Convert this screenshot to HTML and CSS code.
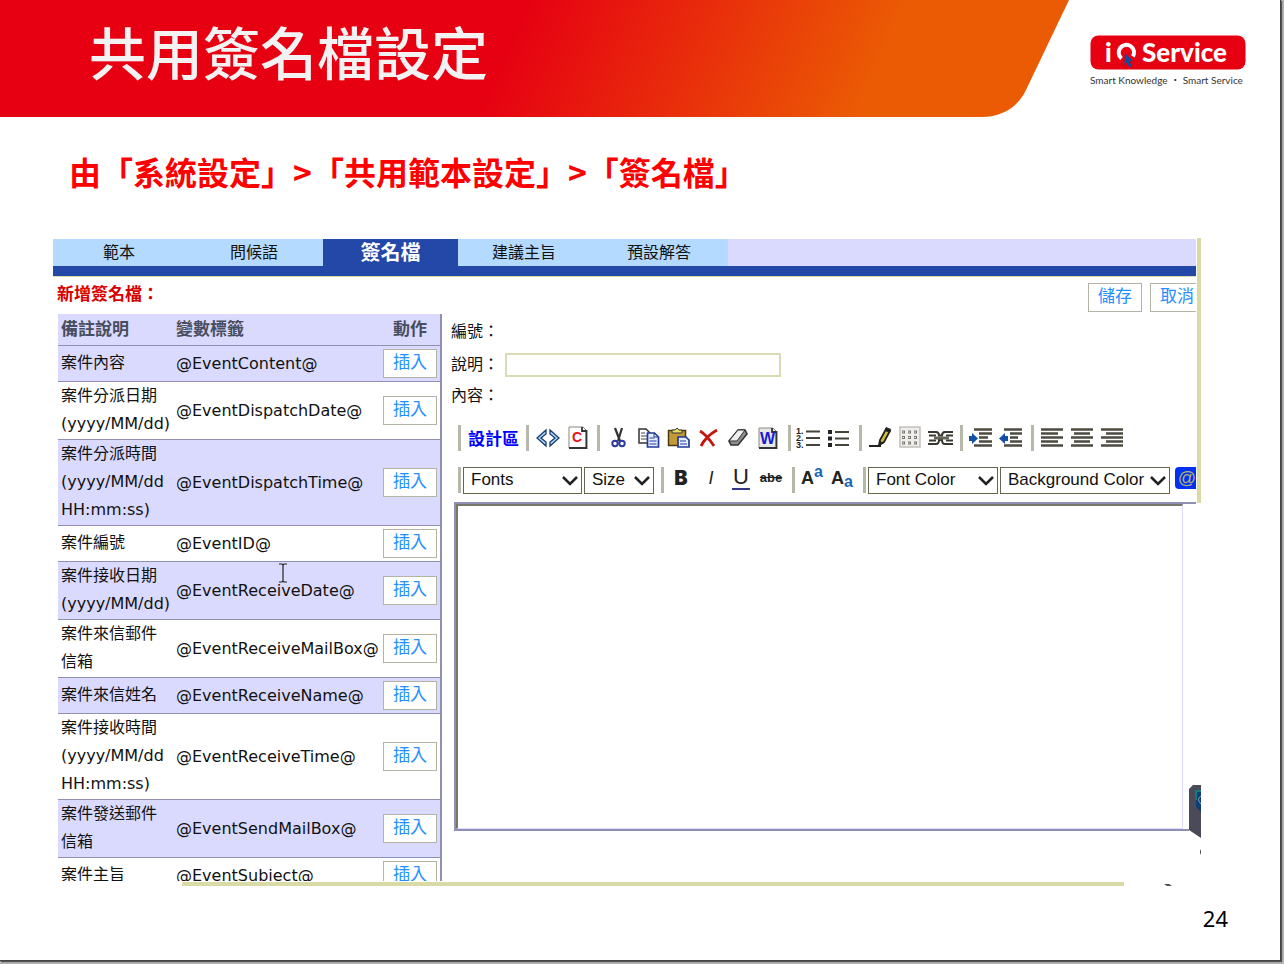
FILE: index.html
```html
<!DOCTYPE html>
<html lang="zh-Hant">
<head>
<meta charset="utf-8">
<title>共用簽名檔設定</title>
<link rel="stylesheet" href="styles.css">
</head>
<body>
<main class="slide">
  <header class="banner">
    <svg class="banner-shape" width="1070" height="117" viewBox="0 0 1070 117" aria-hidden="true">
      <defs>
        <linearGradient id="heat" gradientUnits="userSpaceOnUse" x1="500" y1="60" x2="820" y2="202">
          <stop offset="0" stop-color="#e60012"/>
          <stop offset="1" stop-color="#eb5b04"/>
        </linearGradient>
      </defs>
      <path d="M0 0H1069L1026 90C1018 107 1002 117 982 117H0Z" fill="url(#heat)"/>
    </svg>
    <h1 class="title">共用簽名檔設定</h1>
    <div class="brand">
      <svg width="156" height="36" viewBox="0 0 156 36" role="img" aria-label="iQ Service">
        <rect x="0.5" y="0.5" width="155" height="34" rx="8" fill="#e60012"/>
        <text x="15" y="27" class="brand-name">i</text>
        <path d="M31.500 23.500A7.700 7.700 0 1 1 43 21.500" fill="none" stroke="#fff" stroke-width="4"/>
        <text x="52" y="27" class="brand-name">Service</text>
        <path d="M35 18l8 8-3.500.500 2.500 5-2.500 1-2.500-5-2.500 2.500z" fill="#0f4c9c"/>
      </svg>
      <p class="tagline">Smart Knowledge ・ Smart Service</p>
    </div>
  </header>

  <p class="lead">由「系統設定」&gt;「共用範本設定」&gt;「簽名檔」</p>

  <div class="frame">
    <section class="app">
      <nav class="tabs">
        <button class="tab">範本</button>
        <button class="tab">問候語</button>
        <button class="tab active">簽名檔</button>
        <button class="tab">建議主旨</button>
        <button class="tab">預設解答</button>
      </nav>
      <div class="heading">
        <h2>新增簽名檔：</h2>
        <div class="actions">
          <button class="btn">儲存</button>
          <button class="btn">取消</button>
        </div>
      </div>
      <div class="columns">
        <table class="vars">
          <thead>
            <tr><th class="note">備註說明</th><th class="tag">變數標籤</th><th class="act">動作</th></tr>
          </thead>
          <tbody>
            <tr><td>案件內容</td><td>@EventContent@</td><td><button class="btn">插入</button></td></tr>
            <tr><td>案件分派日期<br>(yyyy/MM/dd)</td><td>@EventDispatchDate@</td><td><button class="btn">插入</button></td></tr>
            <tr><td>案件分派時間<br>(yyyy/MM/dd<br>HH:mm:ss)</td><td>@EventDispatchTime@</td><td><button class="btn">插入</button></td></tr>
            <tr><td>案件編號</td><td>@EventID@</td><td><button class="btn">插入</button></td></tr>
            <tr><td>案件接收日期<br>(yyyy/MM/dd)</td><td>@EventReceiveDate@</td><td><button class="btn">插入</button></td></tr>
            <tr><td>案件來信郵件<br>信箱</td><td>@EventReceiveMailBox@</td><td><button class="btn">插入</button></td></tr>
            <tr><td>案件來信姓名</td><td>@EventReceiveName@</td><td><button class="btn">插入</button></td></tr>
            <tr><td>案件接收時間<br>(yyyy/MM/dd<br>HH:mm:ss)</td><td>@EventReceiveTime@</td><td><button class="btn">插入</button></td></tr>
            <tr><td>案件發送郵件<br>信箱</td><td>@EventSendMailBox@</td><td><button class="btn">插入</button></td></tr>
            <tr><td>案件主旨</td><td>@EventSubject@</td><td><button class="btn">插入</button></td></tr>
          </tbody>
        </table>

        <form class="editor">
          <p class="field">編號：</p>
          <p class="field wide"><label for="desc">說明：</label><input id="desc" class="text" type="text"></p>
          <p class="field last"><label for="body">內容：</label></p>

          <div class="toolbar">
            <i class="sep"></i>
            <button type="button" class="design">設計區</button>
            <i class="sep"></i>
            <div class="group">
              <button type="button" class="tool" aria-label="HTML"><svg width="24" height="24" viewBox="0 0 24 24"><path d="M10 4v4l-5 4 5 4v4L1 12zM14 4v4l5 4-5 4v4l9-8z" fill="#a9d4f0" stroke="#1b3f73" stroke-width="1.300"/></svg></button>
              <button type="button" class="tool" aria-label="清除"><svg width="24" height="24" viewBox="0 0 24 24"><path d="M3 1h14l3 3v18H3z" fill="#fff" stroke="#8a8a80"/><path d="M16 1v4h4.500v17H3" fill="none" stroke="#333" stroke-width="1.800"/><text x="6" y="16" class="glyph-c">C</text></svg></button>
            </div>
            <i class="sep"></i>
            <div class="group">
              <button type="button" class="tool" aria-label="剪下"><svg width="24" height="24" viewBox="0 0 24 24"><path d="M8 2l5 13M15 2l-4 13" stroke="#333" stroke-width="2.200" fill="none"/><circle cx="8" cy="17.500" r="2.700" fill="none" stroke="#2c3aa0" stroke-width="2"/><circle cx="15" cy="17.500" r="2.700" fill="none" stroke="#2c3aa0" stroke-width="2"/></svg></button>
              <button type="button" class="tool" aria-label="複製"><svg width="24" height="24" viewBox="0 0 24 24"><path d="M2 3h7l4 4v10H2z" fill="#fff" stroke="#333" stroke-width="1.500"/><path d="M4 7h4M4 10h6M4 13h6" stroke="#444"/><path d="M10.500 7h7l4 4v10h-11z" fill="#e8ecff" stroke="#223a9a" stroke-width="1.700"/><path d="M17 7v4h4M12.500 12h5M12.500 15h7M12.500 18h7" stroke="#223a9a" fill="none"/></svg></button>
              <button type="button" class="tool" aria-label="貼上"><svg width="24" height="24" viewBox="0 0 24 24"><path d="M1.500 4.500h17v15h-17z" fill="#c39a3a" stroke="#4a3a10" stroke-width="1.500"/><path d="M5 7V4h3l2-2 2 2h3v3z" fill="#e8e060" stroke="#333"/><path d="M11 11h8l3 3v7H11z" fill="#e8ecff" stroke="#223a9a" stroke-width="1.700"/><path d="M13 15h6M13 18h7" stroke="#223a9a"/></svg></button>
              <button type="button" class="tool" aria-label="刪除"><svg width="24" height="24" viewBox="0 0 24 24"><path d="M3 5c5 3 10 9 14 15M20 4C13 8 7 14 4 20" fill="none" stroke="#c4160c" stroke-width="2.800"/></svg></button>
              <button type="button" class="tool" aria-label="橡皮擦"><svg width="24" height="24" viewBox="0 0 24 24"><path d="M2 15l9-11h7l2 4-9 11H4z" fill="#8f8f8f" stroke="#333" stroke-width="1.600"/><path d="M2 15l9-11h7l-8 11z" fill="#eee" stroke="#333"/></svg></button>
              <button type="button" class="tool" aria-label="Word"><svg width="24" height="24" viewBox="0 0 24 24"><path d="M2 2h14l3 3v17H2z" fill="#e8e8e8" stroke="#8a8a80"/><path d="M15 2v4h4.500v16H2" fill="none" stroke="#333" stroke-width="1.800"/><text x="3" y="18" class="glyph-w">W</text></svg></button>
            </div>
            <i class="sep"></i>
            <div class="group">
              <button type="button" class="tool" aria-label="編號清單"><svg width="24" height="24" viewBox="0 0 24 24"><text x="-2" y="8" class="glyph-n">1.</text><text x="-2" y="15" class="glyph-n">2.</text><text x="-2" y="22" class="glyph-n">3.</text><path d="M8 5.500h14M8 12h14M8 19h14" stroke="#444438" stroke-width="2"/></svg></button>
              <button type="button" class="tool" aria-label="項目清單"><svg width="24" height="24" viewBox="0 0 24 24"><path d="M0 4h4v4H0zM0 10.500h4v4H0zM0 17h4v4H0z" fill="#222"/><path d="M7 6h14M7 12.500h14M7 19h14" stroke="#444438" stroke-width="2"/></svg></button>
            </div>
            <i class="sep"></i>
            <div class="group">
              <button type="button" class="tool" aria-label="畫筆"><svg width="24" height="24" viewBox="0 0 24 24"><path d="M0 20h12" stroke="#222" stroke-width="2"/><path d="M10 19l1-5 6-11 4 2-6 11z" fill="#d2bd35" stroke="#222" stroke-width="1.800"/><path d="M17 1l5 2-1 4-5-2zM10 20l1-5 4 2z" fill="#222"/></svg></button>
              <button type="button" class="tool" aria-label="表格"><svg width="24" height="24" viewBox="0 0 24 24"><path d="M1 1h20v20H1z" fill="#efeeee" stroke="#c4c0b8" stroke-width="1.500"/><path d="M3 6h17M3 11.500h17M3 17h17" stroke="#77736b" stroke-width="3" stroke-dasharray="3 3"/><path d="M3.500 6h16M3.500 11.500h16M3.500 17h16" stroke="#efeeee" stroke-width="1.200" stroke-dasharray="1.500 4.500"/></svg></button>
              <button type="button" class="tool" aria-label="分隔線"><svg width="24" height="24" viewBox="0 0 24 24"><path d="M-1 6h8q3 0 3 3.500h3Q13 6 16 6h8M-1 18h8q3 0 3-4h3q0 4 3 4h8M0 9.500h7M0 14.500h7M17 9.500h7M17 14.500h7" fill="none" stroke="#383830" stroke-width="2"/><path d="M5 12h15" stroke="#666658" stroke-width="3"/></svg></button>
            </div>
            <i class="sep"></i>
            <div class="group">
              <button type="button" class="tool" aria-label="增加縮排"><svg width="24" height="24" viewBox="0 0 24 24"><path d="M4 3.500h18M9 7.500h13M9 11.500h9M9 15.500h13M4 19.500h18" stroke="#4d4b40" stroke-width="2.400"/><path d="M-1 10h3V7l6 5.500L2 18v-3h-3z" fill="#1450a8"/></svg></button>
              <button type="button" class="tool" aria-label="減少縮排"><svg width="24" height="24" viewBox="0 0 24 24"><path d="M4 3.500h18M10 7.500h12M10 11.500h8M10 15.500h12M4 19.500h18" stroke="#4d4b40" stroke-width="2.400"/><path d="M8 10H5V7l-6 5.500L5 18v-3h3z" fill="#1450a8"/></svg></button>
            </div>
            <i class="sep"></i>
            <div class="group">
              <button type="button" class="tool" aria-label="靠左"><svg width="24" height="24" viewBox="0 0 24 24"><path d="M0 3.500h22M0 7.500h17M0 11.500h22M0 15.500h17M0 19.500h22" stroke="#4d4b40" stroke-width="2.400"/></svg></button>
              <button type="button" class="tool" aria-label="置中"><svg width="24" height="24" viewBox="0 0 24 24"><path d="M0 3.500h22M3 7.500h16M0 11.500h22M3 15.500h16M0 19.500h22" stroke="#4d4b40" stroke-width="2.400"/></svg></button>
              <button type="button" class="tool" aria-label="靠右"><svg width="24" height="24" viewBox="0 0 24 24"><path d="M0 3.500h22M5 7.500h17M0 11.500h22M5 15.500h17M0 19.500h22" stroke="#4d4b40" stroke-width="2.400"/></svg></button>
            </div>
          </div>

          <div class="toolbar">
            <i class="sep"></i>
            <div class="selects">
              <span class="pick font"><select aria-label="Fonts"><option>Fonts</option></select><svg width="16" height="11" viewBox="0 0 16 11"><path d="M1 2l7 7 7-7" fill="none" stroke="#222" stroke-width="2.600"/></svg></span>
              <span class="pick size"><select aria-label="Size"><option>Size</option></select><svg width="16" height="11" viewBox="0 0 16 11"><path d="M1 2l7 7 7-7" fill="none" stroke="#222" stroke-width="2.600"/></svg></span>
            </div>
            <i class="sep"></i>
            <div class="group styles">
              <button type="button" class="tool bold">B</button>
              <button type="button" class="tool italic">I</button>
              <button type="button" class="tool under">U</button>
              <button type="button" class="tool strike">abe</button>
            </div>
            <i class="sep"></i>
            <div class="group styles">
              <button type="button" class="tool script">A<sup>a</sup></button>
              <button type="button" class="tool script">A<sub>a</sub></button>
            </div>
            <i class="sep"></i>
            <div class="selects">
              <span class="pick color"><select aria-label="Font Color"><option>Font Color</option></select><svg width="16" height="11" viewBox="0 0 16 11"><path d="M1 2l7 7 7-7" fill="none" stroke="#222" stroke-width="2.600"/></svg></span>
              <span class="pick back"><select aria-label="Background Color"><option>Background Color</option></select><svg width="16" height="11" viewBox="0 0 16 11"><path d="M1 2l7 7 7-7" fill="none" stroke="#222" stroke-width="2.600"/></svg></span>
            </div>
            <button type="button" class="at">@</button>
          </div>

          <div class="canvas"><textarea id="body"></textarea></div>
        </form>
      </div>
    </section>
    <div class="rail"></div>
    <svg class="cursor" width="10" height="20" viewBox="0 0 10 20" aria-hidden="true"><path d="M1 1h3l1 1 1-1h3M5 2v16M1 19h3l1-1 1 1h3" fill="none" stroke="#222" stroke-width="1.200"/></svg>
    <svg class="pod" width="12" height="74" viewBox="0 0 12 74" aria-hidden="true">
      <path d="M4 0h8v53L0 45V4z" fill="#4b4a59"/>
      <path d="M12 6H7v16l5 5z" fill="#0c3f78"/>
      <path d="M12 6H7v9" fill="none" stroke="#137a80" stroke-width="2"/>
      <path d="M12 11q-5 3 0 8" fill="none" stroke="#9aa0b0" stroke-width="1"/>
      <path d="M12 64q-2 3 0 6z" fill="#444"/>
    </svg>
    <svg class="speck" width="8" height="3" viewBox="0 0 8 3" aria-hidden="true"><path d="M0 1h5l3 2H3z" fill="#4b4a44"/></svg>
  </div>
  <div class="ledge"></div>
  <footer class="page">24</footer>
</main>
</body>
</html>
```
FILE: styles.css
```css
* { box-sizing: border-box; }
body, h1, h2, p { margin: 0; }
body {
  height: 100vh;
  padding: 0 3px 3px 0;
  background: #b4b4b4;
  color: #111;
  font: 16px/28px "DejaVu Sans", "Noto Sans CJK TC", sans-serif;
}
button, input, select, textarea { font: inherit; color: inherit; margin: 0; }
button { cursor: pointer; }

.slide {
  height: 100%;
  display: flex;
  flex-direction: column;
  background: #fff;
  border: solid #444;
  border-width: 0 1px 1px 0;
  box-shadow: 1px 1px 1px #555;
}

.banner {
  position: relative;
  display: flex;
  justify-content: space-between;
  height: 117px;
  padding: 0 34px 0 89px;
}
.banner-shape { position: absolute; left: 0; top: 0; }
.title {
  position: relative;
  padding-top: 10px;
  color: #f2f2f2;
  font: 500 57px/80px "Noto Sans CJK TC", sans-serif;
}
.brand { width: 156px; padding-top: 35px; }
.brand svg { display: block; }
.brand-name { font: 900 26px Lato, sans-serif; fill: #fff; }
.tagline {
  color: #333;
  font: 10px/18px Lato, "Noto Sans CJK TC", sans-serif;
  white-space: nowrap;
}

.lead {
  height: 121px;
  padding: 34px 0 0 69px;
  color: #f00;
  font: 700 32px/40px "Noto Sans CJK TC", sans-serif;
}

.frame {
  position: relative;
  flex: 1;
  min-height: 0;
  display: flex;
  gap: 1px;
  margin: 0 79px 0 53px;
}
.app { flex: 1; min-width: 0; overflow: hidden; padding-top: 1px; }
.rail { width: 4px; height: 265px; background: #dadaa6; }

.tabs {
  display: flex;
  background: #dadaff;
  border-bottom: 10px solid #2448a8;
}
.tab {
  width: 135px;
  height: 27px;
  padding: 0 3px 4px 0;
  border: 0;
  background: #b4daff;
  font: 16px/22px "Noto Sans CJK TC", sans-serif;
}
.tab.active { padding: 0 0 2px; background: #2448a8; color: #fff; font-size: 20px; font-weight: 700; }

.heading {
  display: flex;
  justify-content: space-between;
  height: 38px;
  margin-right: -8px;
  padding: 6px 0 0 4px;
  border-top: 1px solid #dadaa6;
}
.heading h2 {
  color: #d80000;
  font: 700 17px/20px "Noto Sans CJK TC", sans-serif;
}
.actions { display: flex; gap: 8px; }

.btn {
  display: block;
  width: 54px;
  height: 29px;
  padding: 0 0 6px;
  border: 1px solid #b4b4a4;
  background: #fff;
  color: #2490ff;
  font: 17px/20px "Noto Sans CJK TC", sans-serif;
}

.columns { display: flex; align-items: flex-start; padding-left: 5px; }

.vars {
  width: 384px;
  flex: none;
  table-layout: fixed;
  border-spacing: 0;
  border-right: 2px solid #9090b4;
}
.vars th {
  height: 32px;
  padding: 0 3px 3px;
  background: #dadaff;
  border-bottom: 1px solid #9090b4;
  color: #484d60;
  font: 700 17px/28px "Noto Sans CJK TC", sans-serif;
  text-align: left;
}
.vars .note { width: 115px; }
.vars .tag { width: 208px; }
.vars .act { padding-left: 12px; }
.vars td {
  padding: 1px 0 0 3px;
  border-bottom: 1px solid #9090b4;
  white-space: nowrap;
}
.vars td:first-child { padding: 0 0 1px 3px; }
.vars td:last-child { padding: 3px 0 3px 2px; }
.vars tbody tr:nth-child(odd) td { background: #dadaff; }

.editor { flex: 1; min-width: 0; padding: 4px 0 0 9px; }
.field { display: flex; align-items: center; height: 28px; }
.field.wide { height: 38px; gap: 6px; }
.field.last { height: 24px; }
.text { width: 276px; height: 24px; border: 2px solid #dadab4; background: #fff; }
.field.last + .toolbar { margin-top: 9px; }

.toolbar { display: flex; align-items: center; gap: 7px; height: 42px; padding-left: 7px; }
.toolbar > * { flex: none; }
.sep { width: 3px; height: 26px; background: #b8b8aa; }
.group { display: flex; gap: 6px; }
.group.styles { margin: 0 2px 4px -2px; }
.tool {
  display: flex;
  align-items: center;
  justify-content: center;
  width: 24px;
  height: 24px;
  padding: 0;
  border: 0;
  background: none;
  color: #222;
}
.tool svg { overflow: visible; }
.design {
  padding: 0;
  border: 0;
  background: none;
  color: #00f;
  font: 700 17px/24px "Noto Sans CJK TC", sans-serif;
}
.glyph-c { font: 700 14px "Liberation Sans", sans-serif; fill: #f01010; }
.glyph-w { font: 700 16px "Liberation Sans", sans-serif; fill: #1a1ad0; }
.glyph-n { font: 700 9px "Liberation Sans", sans-serif; fill: #222; }

.selects { display: flex; gap: 2px; margin: 0 0 0 -5px; }
.pick { display: grid; align-items: center; }
.pick > * { grid-area: 1 / 1; }
.pick svg { justify-self: end; margin-right: 4px; pointer-events: none; }
.pick select {
  width: 100%;
  height: 27px;
  padding: 0 7px;
  border: 1px solid #66664c;
  background: #fff;
  appearance: none;
  font: 17px/24px "Liberation Sans", sans-serif;
}
.font { width: 119px; }
.size { width: 70px; }
.color { width: 130px; }
.back { width: 170px; }
.bold { font: 900 20px/24px Inter, sans-serif; }
.italic { font: italic 18px/24px "Liberation Sans", sans-serif; }
.under { width: 18px; margin: 0 3px; border-bottom: 2px solid #338; font: 22px/22px "Liberation Sans", sans-serif; }
.strike { font: 700 13px/24px "Liberation Sans", sans-serif; text-decoration: line-through; }
.script { font: 700 18px/24px "Liberation Sans", sans-serif; }
.script sup, .script sub { color: #1c68b8; font-size: 16px; line-height: 1; }
.script sup { padding-bottom: 12px; }
.script sub { padding-top: 8px; }
.at {
  height: 22px;
  width: 24px;
  padding: 0;
  margin: 0 0 4px -2px;
  border: 0;
  border-radius: 4px;
  background: #0030f0;
  color: #b4b46c;
  font: 18px/20px "Liberation Sans", sans-serif;
}

.canvas {
  margin: 1px -8px 0 3px;
  padding-right: 21px;
  border: solid #9090b4;
  border-width: 2px 0 2px 2px;
}
.canvas textarea {
  display: block;
  width: 100%;
  height: 325px;
  border: 2px solid #77776c;
  border-right: 1px solid #dadaff;
  border-bottom: 1px solid #dadaff;
  background: #fff;
  resize: none;
}

.cursor { position: absolute; left: 225px; top: 325px; }
.pod { position: absolute; right: 0; top: 547px; background: #fff; }
.speck { position: absolute; right: 29px; bottom: -5px; }

.ledge { height: 4px; margin: 1px 156px 0 182px; background: #dadaa6; }
.page {
  height: 74px;
  padding: 18px 52px 0 0;
  color: #000;
  font: 22px/28px "Noto Sans", sans-serif;
  text-align: right;
}
```
